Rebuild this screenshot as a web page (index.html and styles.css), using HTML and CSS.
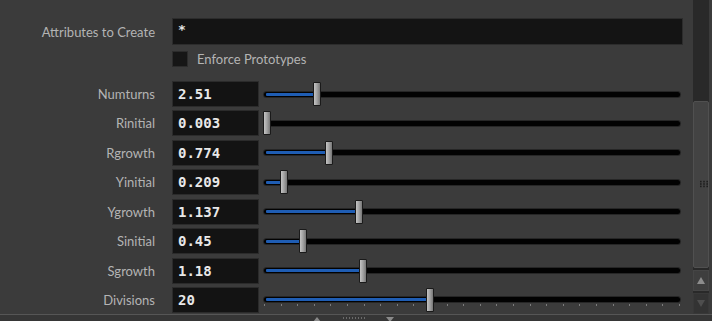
FILE: index.html
```html
<!DOCTYPE html>
<html lang="en">
<head>
    <meta charset="UTF-8">
    <title>Parameters</title>
    <link rel="stylesheet" href="styles.css">
</head>
<body>
    <div class="pane">
        <div class="parms">
            <div class="attr-row">
                <span class="label">Attributes to Create</span>
                <div class="text-field">*</div>
            </div>
            <div class="toggle-row">
                <span class="checkbox"></span>
                <span class="toggle-label">Enforce Prototypes</span>
            </div>
            <div class="parm-list">
                <div class="parm">
                    <span class="label">Numturns</span>
                    <div class="value">2.51</div>
                    <div class="slider">
                        <div class="track"><div class="fill" style="width: 48px"></div></div>
                        <div class="handle" style="left: 50px"></div>
                    </div>
                </div>
                <div class="parm">
                    <span class="label">Rinitial</span>
                    <div class="value">0.003</div>
                    <div class="slider">
                        <div class="track"></div>
                        <div class="handle" style="left: 0px"></div>
                    </div>
                </div>
                <div class="parm">
                    <span class="label">Rgrowth</span>
                    <div class="value">0.774</div>
                    <div class="slider">
                        <div class="track"><div class="fill" style="width: 60px"></div></div>
                        <div class="handle" style="left: 62px"></div>
                    </div>
                </div>
                <div class="parm">
                    <span class="label">Yinitial</span>
                    <div class="value">0.209</div>
                    <div class="slider">
                        <div class="track"><div class="fill" style="width: 15px"></div></div>
                        <div class="handle" style="left: 17px"></div>
                    </div>
                </div>
                <div class="parm">
                    <span class="label">Ygrowth</span>
                    <div class="value">1.137</div>
                    <div class="slider">
                        <div class="track"><div class="fill" style="width: 90px"></div></div>
                        <div class="handle" style="left: 92px"></div>
                    </div>
                </div>
                <div class="parm">
                    <span class="label">Sinitial</span>
                    <div class="value">0.45</div>
                    <div class="slider">
                        <div class="track"><div class="fill" style="width: 34px"></div></div>
                        <div class="handle" style="left: 36px"></div>
                    </div>
                </div>
                <div class="parm">
                    <span class="label">Sgrowth</span>
                    <div class="value">1.18</div>
                    <div class="slider">
                        <div class="track"><div class="fill" style="width: 94px"></div></div>
                        <div class="handle" style="left: 96px"></div>
                    </div>
                </div>
                <div class="parm">
                    <span class="label">Divisions</span>
                    <div class="value">20</div>
                    <div class="slider">
                        <div class="track"><div class="fill" style="width: 161px"></div></div>
                        <div class="ticks"></div>
                        <div class="handle" style="left: 163px"></div>
                    </div>
                </div>
            </div>
        </div>

        <div class="scrollbar">
            <div class="scroll-track"></div>
            <div class="scroll-thumb">
                <svg class="grip" width="10" height="8" viewBox="0 0 10 8">
                    <g fill="#1e1e1e">
                        <rect x="0" y="0" width="2" height="2"/><rect x="4" y="0" width="2" height="2"/><rect x="8" y="0" width="2" height="2"/>
                        <rect x="0" y="3" width="2" height="2"/><rect x="4" y="3" width="2" height="2"/><rect x="8" y="3" width="2" height="2"/>
                        <rect x="0" y="6" width="2" height="2"/><rect x="4" y="6" width="2" height="2"/><rect x="8" y="6" width="2" height="2"/>
                    </g>
                </svg>
            </div>
            <div class="scroll-btn">
                <svg width="8" height="7" viewBox="0 0 8 7"><path d="M4 0 L8 7 L0 7 Z" fill="#8c8c8c"/></svg>
            </div>
            <div class="scroll-btn dim">
                <svg width="8" height="7" viewBox="0 0 8 7"><path d="M0 0 L8 0 L4 7 Z" fill="#4e4e4e"/></svg>
            </div>
        </div>
    </div>

    <div class="statusbar">
        <svg class="arrow-up" width="8" height="5" viewBox="0 0 8 5"><path d="M4 0 L8 5 L0 5 Z" fill="#8a8a8a"/></svg>
        <span class="dots"></span>
        <svg class="arrow-down" width="8" height="5" viewBox="0 0 8 5"><path d="M0 0 L8 0 L4 5 Z" fill="#8a8a8a"/></svg>
    </div>
</body>
</html>
```

FILE: styles.css
```css
body {
    margin: 0;
    background-color: #3b3b3b;
    font-family: Lato, "Open Sans", sans-serif;
    font-size: 13px;
    color: #b4b4b4;
    overflow: hidden;
}

.pane {
    display: flex;
    height: 314px;
}

.parms {
    flex: 1;
    padding-top: 18px;
}

.label {
    width: 155px;
    margin-right: 17px;
    text-align: right;
    flex-shrink: 0;
}

.attr-row {
    display: flex;
    align-items: center;
    padding-right: 10px;
}

.text-field {
    flex: 1;
    height: 25px;
    background-color: #141414;
    border: 1px solid #2c2c2c;
    color: #e6e6e6;
    font-family: "DejaVu Sans Mono", monospace;
    font-weight: bold;
    font-size: 13px;
    line-height: 22px;
    padding-left: 5px;
}

.toggle-row {
    display: flex;
    align-items: center;
    margin-top: 6px;
    padding-left: 172px;
}

.checkbox {
    width: 14px;
    height: 14px;
    background-color: #161616;
    border: 1px solid #2c2c2c;
}

.toggle-label {
    margin-left: 9px;
}

.parm-list {
    display: flex;
    flex-direction: column;
    gap: 3.43px;
    margin-top: 14px;
}

.parm {
    display: flex;
    align-items: center;
    height: 26px;
}

.value {
    width: 80px;
    height: 24px;
    background-color: #131313;
    border: 1px solid #2b2b2b;
    color: #e8e8e8;
    font-family: "DejaVu Sans Mono", monospace;
    font-weight: bold;
    font-size: 14px;
    line-height: 24px;
    padding-left: 5px;
}

.slider {
    position: relative;
    display: flex;
    align-items: center;
    width: 418px;
    height: 26px;
    margin-left: 4px;
}

.track {
    position: relative;
    flex: 1;
    height: 5px;
    margin: 0 1px;
    background-color: #020202;
    border-radius: 3px;
    box-shadow: 0 0 0 1px #262626;
}

.fill {
    position: absolute;
    left: 2px;
    top: 1px;
    height: 3px;
    background-color: #1f5db3;
    border-radius: 1px;
}

.ticks {
    position: absolute;
    left: 1px;
    width: 418px;
    top: 17px;
    height: 2px;
    background: repeating-linear-gradient(90deg, #7c7c7c 0 1px, transparent 1px 16.6px);
}

.handle {
    position: absolute;
    top: 1px;
    width: 6px;
    height: 22px;
    border: 1px solid #1a1a1a;
    border-radius: 1px;
    background: linear-gradient(90deg, #c4c4c4, #a2a2a2 50%, #777 100%);
}

.scrollbar {
    display: flex;
    flex-direction: column;
    width: 16px;
    margin-right: 3px;
    background-color: #292929;
}

.scroll-track {
    height: 101px;
}

.scroll-thumb {
    display: flex;
    align-items: center;
    justify-content: center;
    height: 166px;
    background-color: #434343;
    border: 1px solid #505050;
    border-radius: 2px;
}

.grip {
    margin-left: 6px;
    margin-top: 0;
}

.scroll-btn {
    display: flex;
    align-items: center;
    justify-content: center;
    height: 19px;
    margin-top: 2px;
    background-color: #3e3e3e;
    border: 1px solid #454545;
}

.scroll-btn.dim {
    background-color: #333;
    border-color: #383838;
}

.statusbar {
    display: flex;
    align-items: flex-start;
    height: 6px;
    border-top: 1px solid #565656;
    background-color: #363636;
    padding-left: 313px;
    padding-top: 2px;
}

.dots {
    width: 24px;
    height: 2px;
    margin-left: 22px;
    background: repeating-linear-gradient(90deg, #6a6a6a 0 1px, transparent 1px 3px);
}

.arrow-down {
    margin-left: 19px;
}
```
